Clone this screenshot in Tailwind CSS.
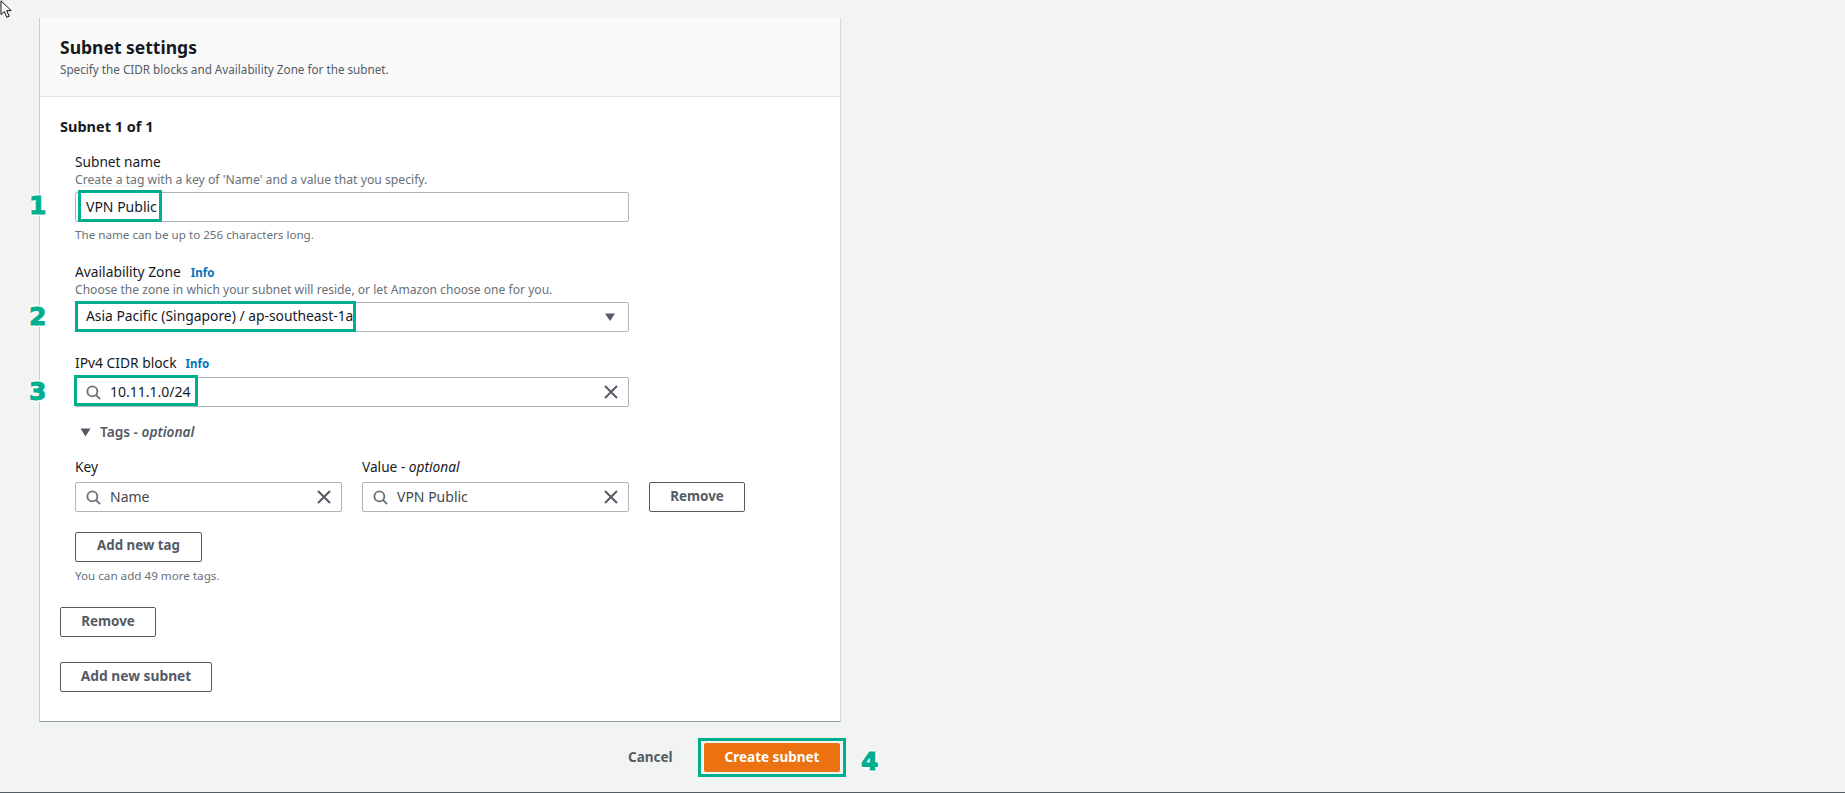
<!DOCTYPE html>
<html>
<head>
<meta charset="utf-8">
<script src="https://cdn.jsdelivr.net/npm/@tailwindcss/browser@4"></script>
<title>Subnet settings</title>
</head>
<body class="bg-[#f2f3f3] font-['Noto_Sans',sans-serif] text-[#16191f] overflow-hidden">
<div class="relative w-[1845px] h-[793px] border-b-[1px] border-[#545b64] flex flex-col">

  <svg class="absolute left-0 top-0" width="14" height="19" viewBox="0 0 14 19"><path d="M1 0.8V14.5L4.3 11.5L6.8 17.3L9.2 16.2L6.7 10.6H11.2Z" fill="#fff" stroke="#111" stroke-width="1"/></svg>

  <!-- Card -->
  <section class="ml-[39px] mt-[18px] w-[802px] h-[704px] shrink-0 bg-white border-l border-[#c6cbcb] border-b border-b-[#8f9ba0] border-r border-r-[#d5dbdb] flex flex-col">
    <header class="h-[79px] bg-[#fafafa] border-b border-[#e3e6e6] pl-[20px] pt-[18px] shrink-0">
      <h2 class="text-[17.5px] leading-[22px] font-bold">Subnet settings</h2>
      <p class="text-[11.7px] leading-[16px] mt-[3px] text-[#545b64]">Specify the CIDR blocks and Availability Zone for the subnet.</p>
    </header>
    <div class="pl-[20px] pt-[20px] flex flex-col">
      <h3 class="text-[14.5px] leading-[18px] font-bold">Subnet 1 of 1</h3>
      <div class="pl-[15px] flex flex-col">
        <label class="mt-[18px] text-[13.7px] leading-[18px]">Subnet name</label>
        <p class="text-[12.2px] leading-[16px] mt-[1px] text-[#687078]">Create a tag with a key of 'Name' and a value that you specify.</p>
        <div class="mt-[4px] w-[554px] h-[30px] border border-[#aab7b8] rounded-[2px] bg-white flex items-center pb-[2px] pl-[10px] text-[14px]">VPN Public</div>
        <p class="text-[11.65px] leading-[16px] mt-[5px] text-[#687078]">The name can be up to 256 characters long.</p>

        <div class="mt-[20px] h-[18px] flex items-baseline text-[13.8px] leading-[18px]"><label>Availability Zone</label><a class="ml-[10px] text-[11.5px] font-bold text-[#0073bb]">Info</a></div>
        <p class="text-[12.1px] leading-[16px] mt-[1px] text-[#687078]">Choose the zone in which your subnet will reside, or let Amazon choose one for you.</p>
        <div class="mt-[4px] w-[554px] h-[30px] border border-[#aab7b8] rounded-[2px] bg-white flex items-center justify-between pl-[10px] pr-[12px] text-[13.85px]">
          <span class="pb-[2px]">Asia Pacific (Singapore) / ap-southeast-1a</span>
          <svg width="12" height="10" viewBox="0 0 12 10"><path d="M1 1.5H11L6 9Z" fill="#545b64"/></svg>
        </div>

        <div class="mt-[22px] h-[18px] flex items-baseline text-[13.8px] leading-[18px]"><label>IPv4 CIDR block</label><a class="ml-[9px] text-[11.5px] font-bold text-[#0073bb]">Info</a></div>
        <div class="mt-[5px] w-[554px] h-[30px] border border-[#aab7b8] rounded-[2px] bg-white flex items-center justify-between pl-[10px] pr-[10px] text-[14px]">
          <span class="flex items-center gap-[9px]">
            <svg width="15" height="15" viewBox="0 0 16 16" fill="none" stroke="#687078" stroke-width="2"><circle cx="6.8" cy="6.8" r="5.3"/><path d="M10.8 10.8L15 15"/></svg>
            <span class="pb-[2px]">10.11.1.0/24</span>
          </span>
          <svg width="14" height="14" viewBox="0 0 14 14" fill="none" stroke="#545b64" stroke-width="2"><path d="M1 1L13 13M13 1L1 13"/></svg>
        </div>

        <div class="mt-[16px] flex items-center gap-[9px] h-[18px] text-[13.7px] font-semibold text-[#545b64]">
          <svg class="ml-[5px]" width="11" height="9" viewBox="0 0 11 9"><path d="M0.5 0.5H10.5L5.5 8.5Z" fill="#545b64"/></svg>
          <span>Tags - <i>optional</i></span>
        </div>

        <div class="mt-[17px] flex">
          <div class="w-[267px] flex flex-col">
            <label class="text-[13.7px] leading-[18px]">Key</label>
            <div class="mt-[6px] h-[30px] border border-[#aab7b8] rounded-[2px] bg-white flex items-center justify-between px-[10px] text-[14px] text-[#414750]">
              <span class="flex items-center gap-[9px]">
                <svg width="15" height="15" viewBox="0 0 16 16" fill="none" stroke="#687078" stroke-width="2"><circle cx="6.8" cy="6.8" r="5.3"/><path d="M10.8 10.8L15 15"/></svg>
                <span class="pb-[2px]">Name</span>
              </span>
              <svg width="14" height="14" viewBox="0 0 14 14" fill="none" stroke="#545b64" stroke-width="2"><path d="M1 1L13 13M13 1L1 13"/></svg>
            </div>
          </div>
          <div class="ml-[20px] w-[267px] flex flex-col">
            <label class="text-[13.7px] leading-[18px]">Value - <i>optional</i></label>
            <div class="mt-[6px] h-[30px] border border-[#aab7b8] rounded-[2px] bg-white flex items-center justify-between px-[10px] text-[14px] text-[#414750]">
              <span class="flex items-center gap-[9px]">
                <svg width="15" height="15" viewBox="0 0 16 16" fill="none" stroke="#687078" stroke-width="2"><circle cx="6.8" cy="6.8" r="5.3"/><path d="M10.8 10.8L15 15"/></svg>
                <span class="pb-[2px]">VPN Public</span>
              </span>
              <svg width="14" height="14" viewBox="0 0 14 14" fill="none" stroke="#545b64" stroke-width="2"><path d="M1 1L13 13M13 1L1 13"/></svg>
            </div>
          </div>
          <button class="ml-[20px] mt-[24px] w-[96px] h-[30px] pb-[2px] border border-[#545b64] rounded-[2px] bg-white text-[13.4px] font-bold text-[#545b64]">Remove</button>
        </div>

        <button class="mt-[20px] w-[127px] h-[30px] pb-[2px] border border-[#545b64] rounded-[2px] bg-white text-[13.3px] font-bold text-[#545b64]">Add new tag</button>
        <p class="text-[11.65px] leading-[16px] mt-[6px] text-[#687078]">You can add 49 more tags.</p>
      </div>
      <button class="mt-[23px] w-[96px] h-[30px] pb-[2px] border border-[#545b64] rounded-[2px] bg-white text-[13.4px] font-bold text-[#545b64]">Remove</button>
      <button class="mt-[25px] w-[152px] h-[30px] pb-[2px] border border-[#545b64] rounded-[2px] bg-white text-[13.8px] font-bold text-[#545b64]">Add new subnet</button>
    </div>
  </section>

  <!-- Footer actions -->
  <div class="ml-[628px] mt-[20px] flex items-center w-[212px] h-[30px] justify-between">
    <button class="text-[13.5px] font-bold text-[#545b64]">Cancel</button>
    <button class="w-[136px] h-[29px] bg-[#ec7211] rounded-[2px] text-white text-[13.5px] font-bold">Create subnet</button>
  </div>

  <!-- Annotation overlays -->
  <div class="absolute left-[78px] top-[190px] w-[84px] h-[32px] border-[3px] border-[#01ae8e]"></div>
  <div class="absolute left-[75px] top-[301px] w-[281px] h-[31px] border-[3px] border-[#01ae8e]"></div>
  <div class="absolute left-[74px] top-[375px] w-[124px] h-[31px] border-[3px] border-[#01ae8e]"></div>
  <div class="absolute left-[698px] top-[738px] w-[148px] h-[39px] border-[3px] border-[#01ae8e]"></div>

  <span class="absolute left-[29px] top-[192px] text-[25px] leading-[28px] font-bold font-['DejaVu_Sans',sans-serif] text-[#01ae8e] [-webkit-text-stroke:1px_#01ae8e] [text-shadow:2px_0_0_#fff,-2px_0_0_#fff,0_2px_0_#fff,0_-2px_0_#fff]">1</span>
  <span class="absolute left-[29px] top-[303px] text-[25px] leading-[28px] font-bold font-['DejaVu_Sans',sans-serif] text-[#01ae8e] [-webkit-text-stroke:1px_#01ae8e] [text-shadow:2px_0_0_#fff,-2px_0_0_#fff,0_2px_0_#fff,0_-2px_0_#fff]">2</span>
  <span class="absolute left-[29px] top-[378px] text-[25px] leading-[28px] font-bold font-['DejaVu_Sans',sans-serif] text-[#01ae8e] [-webkit-text-stroke:1px_#01ae8e] [text-shadow:2px_0_0_#fff,-2px_0_0_#fff,0_2px_0_#fff,0_-2px_0_#fff]">3</span>
  <span class="absolute left-[861px] top-[748px] text-[25px] leading-[28px] font-bold font-['DejaVu_Sans',sans-serif] text-[#01ae8e] [-webkit-text-stroke:1px_#01ae8e] [text-shadow:2px_0_0_#fff,-2px_0_0_#fff,0_2px_0_#fff,0_-2px_0_#fff]">4</span>
</div>
</body>
</html>
